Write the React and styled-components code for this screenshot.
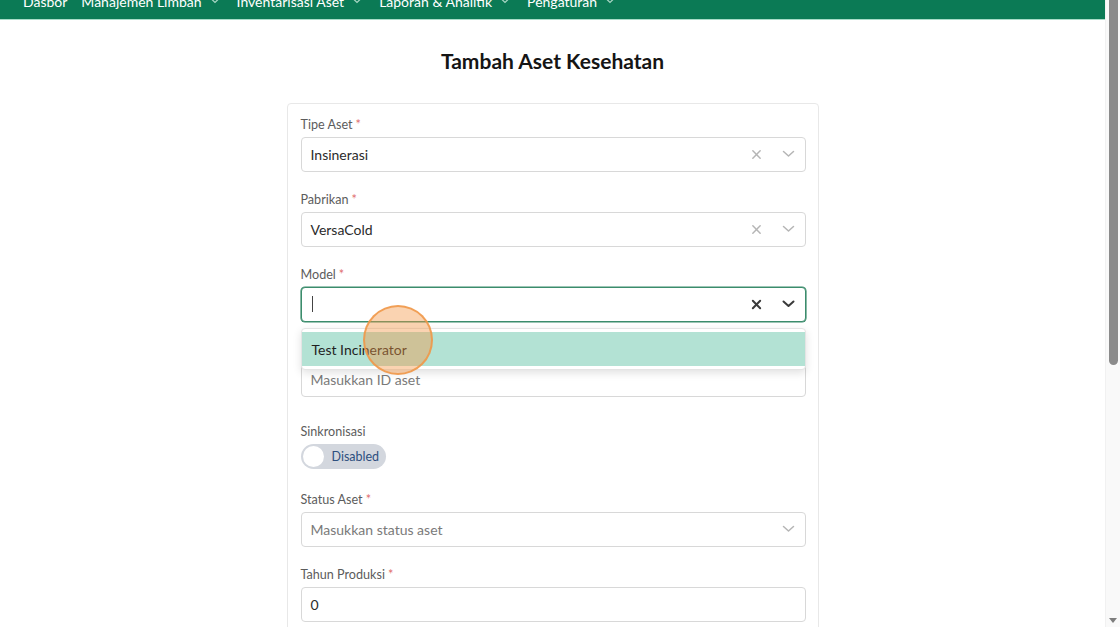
import React, { useLayoutEffect } from 'react';
import styled, { createGlobalStyle } from 'styled-components';

const GlobalStyle = createGlobalStyle`
    html {
        scroll-behavior: auto;
    }
    body {
        margin: 0;
        padding-right: 15px;
        background: #ffffff;
        font-family: Lato, "Open Sans", sans-serif;
        color: #333333;
    }
    * {
        box-sizing: border-box;
    }
`;

// browser scrollbar, drawn because headless chrome hides it
const ScrollTrack = styled.div`
    position: fixed;
    top: 0;
    right: 0;
    width: 15px;
    height: 100vh;
    background: #f9f9f9;
    border-left: 1px solid #f1f1f1;
    z-index: 20;
`;

const ScrollThumb = styled.div`
    position: absolute;
    top: 0;
    left: 3px;
    width: 9px;
    height: 365px;
    background: #8b8b8b;
    border-radius: 0 0 5px 5px;
`;

const ScrollArrow = styled.div`
    position: absolute;
    bottom: 4px;
    left: 3px;
    width: 0;
    height: 0;
    border-left: 4.5px solid transparent;
    border-right: 4.5px solid transparent;
    border-top: 5px solid #7d7d7d;
`;

const Header = styled.header`
    height: 41px;
    background: #0b7a55;
    border-bottom: 1px solid #a7dcc8;
    display: flex;
    align-items: center;
    padding: 4px 0 0 23px;
    gap: 14px;
`;

const NavItem = styled.div`
    display: flex;
    align-items: center;
    gap: 9px;
    color: #ffffff;
    font-size: 14px;
    margin-right: ${p => (p.$chevron ? '4px' : '0')};
`;

const Main = styled.main`
    display: flex;
    flex-direction: column;
    align-items: center;
    padding: 29px 0 60px;
`;

const Title = styled.h1`
    margin: 0 0 30px;
    font-size: 21px;
    line-height: 24px;
    font-weight: 700;
    color: #151515;
`;

const Card = styled.div`
    width: 532px;
    border: 1px solid #e8e8e8;
    border-radius: 4px;
    padding: 11px 12px 16px 13px;
`;

const Field = styled.div`
    display: flex;
    flex-direction: column;
    margin-bottom: ${p => p.$mb || 18}px;
`;

const Label = styled.label`
    font-size: 12.6px;
    line-height: 18px;
    padding-top: 1px;
    color: #5c5c5c;
    margin-bottom: 3px;
`;

const Req = styled.span`
    color: #e06b6b;
    margin-left: 3px;
`;

const Box = styled.div`
    position: relative;
    height: 35px;
    border: 1px solid ${p => (p.$focused ? '#3b8c6c' : '#d8d8d8')};
    box-shadow: ${p => (p.$focused ? '0 0 0 0.6px #3b8c6c' : 'none')};
    border-radius: 4px;
    display: flex;
    align-items: center;
    padding: 0 0 1px 9px;
    font-size: 14px;
    color: ${p => (p.$placeholder ? '#7a7a7a' : '#2b2b2b')};
    background: #ffffff;
`;

const BoxText = styled.div`
    flex: 1;
    white-space: nowrap;
`;

const Caret = styled.span`
    display: block;
    width: 1px;
    height: 16px;
    margin-left: 1px;
    background: #444444;
`;

const Indicators = styled.div`
    display: flex;
    align-items: center;
    height: 100%;
`;

const IconSlot = styled.div`
    width: 32px;
    height: 100%;
    display: flex;
    align-items: center;
    justify-content: center;
`;

const Menu = styled.div`
    position: absolute;
    left: -1px;
    right: -1px;
    top: 40px;
    background: #ffffff;
    border: 1px solid #e4e4e4;
    border-radius: 4px;
    box-shadow: 0 3px 8px rgba(0, 0, 0, 0.12);
    padding: 3px 0;
    z-index: 5;
`;

const Option = styled.div`
    height: 34px;
    display: flex;
    align-items: center;
    padding-left: 10px;
    background: ${p => (p.$active ? '#b3e2d4' : '#ffffff')};
    color: #1f1f1f;
    font-size: 14px;
`;

const ClickMark = styled.div`
    position: absolute;
    left: 61px;
    top: 17px;
    width: 70px;
    height: 70px;
    border-radius: 50%;
    background: rgba(244, 150, 70, 0.42);
    border: 2px solid rgba(240, 150, 70, 0.85);
    z-index: 6;
    pointer-events: none;
`;

const Toggle = styled.div`
    width: 85px;
    height: 25px;
    border-radius: 13px;
    background: #d3d7de;
    display: flex;
    align-items: center;
    padding: 0 2px;
    gap: 8px;
`;

const Knob = styled.span`
    width: 21px;
    height: 21px;
    border-radius: 50%;
    background: #ffffff;
`;

const ToggleText = styled.span`
    font-size: 12.5px;
    color: #2e4f7e;
`;

const Buttons = styled.div`
    display: flex;
    justify-content: flex-end;
    gap: 10px;
    margin-top: 8px;
`;

const Button = styled.button`
    height: 36px;
    padding: 0 18px;
    border-radius: 4px;
    font-family: Lato, sans-serif;
    font-size: 14px;
    border: 1px solid ${p => (p.$primary ? '#0b7a55' : '#d8d8d8')};
    background: ${p => (p.$primary ? '#0b7a55' : '#ffffff')};
    color: ${p => (p.$primary ? '#ffffff' : '#333333')};
`;

const NavChevron = () => (
    <svg width="8" height="6" viewBox="0 0 8 6">
        <path d="M1 1.5 L4 4.5 L7 1.5" fill="none" stroke="#a9d6c4" strokeWidth="1.2" />
    </svg>
);

const Cross = ({ dark }) => (
    <svg width="11" height="11" viewBox="0 0 12 12">
        <path d="M2 2 L10 10 M10 2 L2 10" stroke={dark ? '#3a3a3a' : '#b5b5b5'} strokeWidth={dark ? 2.2 : 1.6} strokeLinecap="round" />
    </svg>
);

const Chevron = ({ dark }) => (
    <svg width="13" height="8" viewBox="0 0 13 8">
        <path d="M1.5 1.5 L6.5 6 L11.5 1.5" fill="none" stroke={dark ? '#3a3a3a' : '#b5b5b5'} strokeWidth={dark ? 2 : 1.5} strokeLinecap="round" strokeLinejoin="round" />
    </svg>
);

const SelectField = ({ label, value, placeholder, clearable, focused, children, mb }) => (
    <Field $mb={mb}>
        <Label>{label}<Req>*</Req></Label>
        <Box $focused={focused} $placeholder={!value && !focused}>
            <BoxText>{focused ? <Caret /> : value || placeholder}</BoxText>
            <Indicators>
                {clearable && <IconSlot><Cross dark={focused} /></IconSlot>}
                <IconSlot><Chevron dark={focused} /></IconSlot>
            </Indicators>
            {children}
        </Box>
    </Field>
);

const TextField = ({ label, value, placeholder, required = true, mb }) => (
    <Field $mb={mb}>
        <Label>{label}{required && <Req>*</Req>}</Label>
        <Box $placeholder={!value}>
            <BoxText>{value || placeholder}</BoxText>
        </Box>
    </Field>
);

const navItems = [
    { name: 'Dasbor' },
    { name: 'Manajemen Limbah', chevron: true },
    { name: 'Inventarisasi Aset', chevron: true },
    { name: 'Laporan & Analitik', chevron: true },
    { name: 'Pengaturan', chevron: true },
];

const App = () => {
    useLayoutEffect(() => {
        window.scrollTo(0, 21);
    }, []);

    return (
        <>
            <GlobalStyle />
            <Header>
                {navItems.map(item => (
                    <NavItem key={item.name} $chevron={item.chevron}>
                        {item.name}
                        {item.chevron && <NavChevron />}
                    </NavItem>
                ))}
            </Header>
            <Main>
                <Title>Tambah Aset Kesehatan</Title>
                <Card>
                    <SelectField label="Tipe Aset" value="Insinerasi" clearable />
                    <SelectField label="Pabrikan" value="VersaCold" clearable />
                    <SelectField label="Model" clearable focused>
                        <Menu>
                            <Option $active>Test Incinerator</Option>
                        </Menu>
                        <ClickMark />
                    </SelectField>
                    <TextField label="ID Aset" placeholder="Masukkan ID aset" mb={25} />
                    <Field $mb={21}>
                        <Label>Sinkronisasi</Label>
                        <Toggle>
                            <Knob />
                            <ToggleText>Disabled</ToggleText>
                        </Toggle>
                    </Field>
                    <SelectField label="Status Aset" placeholder="Masukkan status aset" />
                    <TextField label="Tahun Produksi" value="0" />
                    <TextField label="Kapasitas (kg/jam)" placeholder="Masukkan kapasitas" />
                    <SelectField label="Lokasi" placeholder="Pilih lokasi" />
                    <TextField label="Keterangan" placeholder="Masukkan keterangan" required={false} />
                    <Buttons>
                        <Button>Batal</Button>
                        <Button $primary>Simpan</Button>
                    </Buttons>
                </Card>
            </Main>
            <ScrollTrack>
                <ScrollThumb />
                <ScrollArrow />
            </ScrollTrack>
        </>
    );
};

export default App;
